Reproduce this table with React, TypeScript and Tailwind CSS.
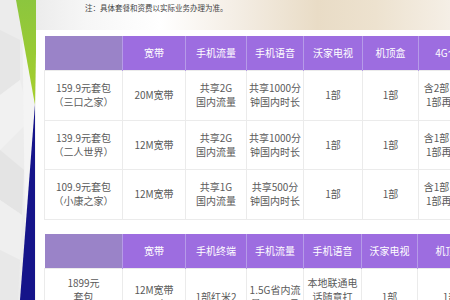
import React from "react";

const cols1 = ["w-[78px]", "w-[63px]", "w-[61px]", "w-[57px]", "w-[59px]", "w-[56px]", "w-[66px]"];
const cols2 = ["w-[78px]", "w-[63px]", "w-[61px]", "w-[57px]", "w-[58px]", "w-[56px]", "w-[66px]"];

function Lines({ t }: { t: string[] }) {
  return (
    <>
      {t.map((s, i) => (
        <div key={i} className="whitespace-nowrap">
          {s}
        </div>
      ))}
    </>
  );
}

type Row = { h: string; cells: string[][] };

function Table({ cols, heads, rows, headH }: { cols: string[]; heads: string[]; rows: Row[]; headH: string }) {
  return (
    <table className="table-fixed border-collapse w-[440px]">
      <colgroup>
        {cols.map((w, i) => (
          <col key={i} className={w} />
        ))}
      </colgroup>
      <thead>
        <tr className={headH}>
          {heads.map((h, i) => (
            <th
              key={i}
              className={
                "p-0 text-center font-normal text-white text-[10px] leading-[14px] border-r border-[#b69be8] " +
                (i === 0 ? "bg-[#9a83c8]" : "bg-[#9d6de0]")
              }
            >
              {h}
            </th>
          ))}
        </tr>
      </thead>
      <tbody>
        {rows.map((r, ri) => (
          <tr key={ri} className={r.h}>
            {r.cells.map((c, ci) => (
              <td
                key={ci}
                className="p-0 text-center align-middle text-[10px] leading-[14px] text-[#5a5a5a] border border-[#ebebeb] overflow-hidden"
              >
                <Lines t={c} />
              </td>
            ))}
          </tr>
        ))}
      </tbody>
    </table>
  );
}

export default function App() {
  return (
    <div className="flex w-[450px] h-[300px] overflow-hidden bg-white font-['Noto_Sans_CJK_SC','Noto_Sans',sans-serif]">
      <div className="w-[36px] shrink-0">
        <svg width="36" height="300" viewBox="0 0 36 300">
          <rect width="36" height="300" fill="#ececec" />
          <polygon points="0,30 20,40 20,80 0,95" fill="#e6e6e6" />
          <polygon points="0,95 20,80 30,120 0,150" fill="#f1f1f1" />
          <polygon points="0,150 24,170 22,215 0,200" fill="#e4e4e4" />
          <polygon points="0,200 22,215 20,260 0,250" fill="#efefef" />
          <polygon points="0,250 20,260 18,300 0,300" fill="#e8e8e8" />
          <polygon points="22,0 36,0 36,300 26,300" fill="#f4f4f4" />
          <defs>
            <linearGradient id="g" x1="0" y1="0" x2="0" y2="1">
              <stop offset="0" stopColor="#8cc63e" />
              <stop offset="1" stopColor="#a6cf2c" />
            </linearGradient>
          </defs>
          <polygon points="16,0 37,0 35,105" fill="url(#g)" />
          <polygon points="35,104 35,300 20,300" fill="#15148a" />
        </svg>
      </div>
      <div className="flex-1 flex flex-col min-w-0">
        <div className="h-[30px] shrink-0 pl-[49px] pt-[3px] bg-[linear-gradient(to_right,#ececec_0%,#f6f6f6_12%,#ffffff_30%,#f3ece2_50%,#e9dcc6_68%,#ede2cf_82%,#f5efe6_100%)]">
          <div className="text-[7.5px] leading-[10px] text-[#444]">注：具体套餐和资费以实际业务办理为准。</div>
        </div>
        <div className="pl-[8px] pt-[6px] flex flex-col gap-[14px]">
          <Table
            cols={cols1}
            headH="h-[34px]"
            heads={["", "宽带", "手机流量", "手机语音", "沃家电视", "机顶盒", "4G个人"]}
            rows={[
              {
                h: "h-[50px]",
                cells: [
                  ["159.9元套包", "（三口之家）"],
                  ["20M宽带"],
                  ["共享2G", "国内流量"],
                  ["共享1000分", "钟国内时长"],
                  ["1部"],
                  ["1部"],
                  ["含2部，超出", "1部再加5元"],
                ],
              },
              {
                h: "h-[49px]",
                cells: [
                  ["139.9元套包", "（二人世界）"],
                  ["12M宽带"],
                  ["共享2G", "国内流量"],
                  ["共享1000分", "钟国内时长"],
                  ["1部"],
                  ["1部"],
                  ["含1部，超出", "1部再加5元"],
                ],
              },
              {
                h: "h-[50px]",
                cells: [
                  ["109.9元套包", "（小康之家）"],
                  ["12M宽带"],
                  ["共享1G", "国内流量"],
                  ["共享500分", "钟国内时长"],
                  ["1部"],
                  ["1部"],
                  ["含1部，超出", "1部再加5元"],
                ],
              },
            ]}
          />
          <Table
            cols={cols2}
            headH="h-[35px]"
            heads={["", "宽带", "手机终端", "手机流量", "手机语音", "沃家电视", "机顶盒"]}
            rows={[
              {
                h: "h-[56px]",
                cells: [
                  ["1899元", "套包", "（一年）"],
                  ["12M宽带", "用一年"],
                  ["1部红米2"],
                  ["1.5G省内流", "量400M/月"],
                  ["本地联通电", "话随意打", "200分钟/月"],
                  ["1部"],
                  ["1部"],
                ],
              },
            ]}
          />
        </div>
      </div>
    </div>
  );
}
